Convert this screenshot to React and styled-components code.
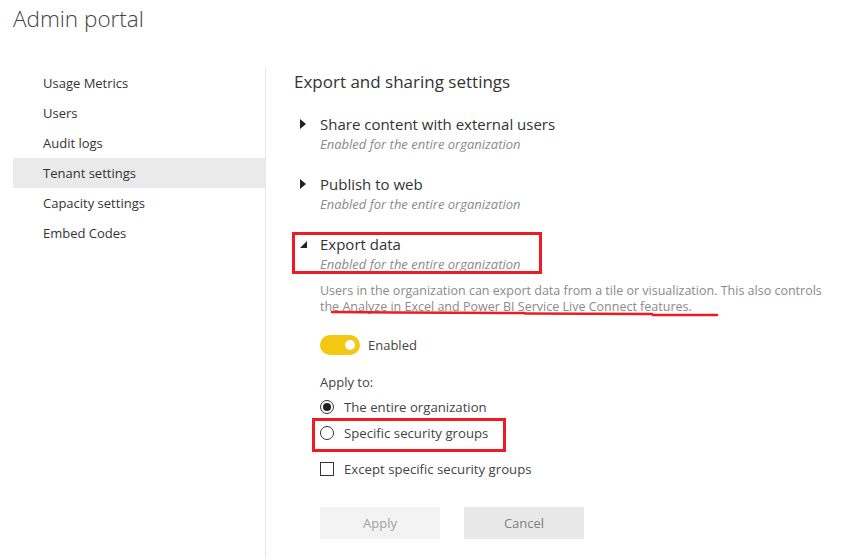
import React from "react";
import styled, { createGlobalStyle } from "styled-components";

const GlobalStyle = createGlobalStyle`
  body {
    margin: 0;
    background: #fff;
    font-family: "Open Sans", "Noto Sans", sans-serif;
    color: #333;
  }
`;

const Page = styled.div`
  width: 858px;
  height: 559px;
  overflow: hidden;
`;

const Title = styled.h1`
  margin: 0;
  padding: 5px 0 0 13px;
  height: 68px;
  box-sizing: border-box;
  font-size: 22.5px;
  font-weight: 300;
  line-height: 28px;
  color: #444;
`;

const Layout = styled.div`
  display: grid;
  grid-template-columns: 253px 1fr;
  margin-left: 13px;
  height: 491px;
`;

const Sidebar = styled.nav`
  display: flex;
  flex-direction: column;
  border-right: 1px solid #e6e6e6;
`;

const NavItem = styled.div`
  height: 30px;
  line-height: 30px;
  padding-left: 30px;
  font-size: 13px;
  color: #333;
  background: ${(p) => (p.$active ? "#eaeaea" : "transparent")};
`;

const Main = styled.main`
  padding: 2px 0 0 28px;
`;

const SectionTitle = styled.h2`
  margin: 0 0 20px;
  font-size: 17px;
  font-weight: 400;
  line-height: 24px;
  color: #333;
`;

const Setting = styled.div`
  position: relative;
  display: grid;
  grid-template-columns: 26px 1fr;
  margin-bottom: 20px;
`;

const Caret = styled.span`
  display: flex;
  align-items: center;
  height: 20px;
  padding-left: 6px;
`;

const SettingName = styled.div`
  font-size: 15px;
  line-height: 20px;
  color: #333;
`;

const SettingState = styled.div`
  font-size: 13px;
  line-height: 20px;
  font-style: italic;
  color: #8a8a8a;
`;

const Details = styled.div`
  grid-column: 2;
  padding-top: 9px;
`;

const Description = styled.p`
  position: relative;
  margin: 0;
  font-size: 12.5px;
  line-height: 16px;
  color: #8a8a8a;
  white-space: nowrap;
`;

const Scribble = styled.svg`
  position: absolute;
  left: 10px;
  top: 28px;
  overflow: visible;
`;

const ToggleRow = styled.label`
  display: flex;
  align-items: center;
  gap: 8px;
  margin-top: 20px;
  height: 20px;
  font-size: 13px;
  color: #444;
`;

const Track = styled.span`
  position: relative;
  width: 40px;
  height: 20px;
  border-radius: 10px;
  background: #f2c811;
`;

const Knob = styled.span`
  position: absolute;
  right: 5px;
  top: 5px;
  width: 10px;
  height: 10px;
  border-radius: 50%;
  background: #fff;
`;

const ApplyLabel = styled.div`
  margin-top: 17px;
  font-size: 13px;
  line-height: 20px;
  color: #444;
`;

const Choices = styled.div`
  display: flex;
  flex-direction: column;
  margin-top: 2px;
`;

const Choice = styled.label`
  position: relative;
  display: flex;
  align-items: center;
  gap: 10px;
  height: 26px;
  font-size: 13.2px;
  color: #444;
  margin-top: ${(p) => p.$gap || 0}px;
`;

const Radio = styled.span`
  box-sizing: border-box;
  width: 14px;
  height: 14px;
  border-radius: 50%;
  border: 1px solid #333;
  display: flex;
  align-items: center;
  justify-content: center;

  &::after {
    content: "";
    width: 8px;
    height: 8px;
    border-radius: 50%;
    background: ${(p) => (p.$checked ? "#222" : "transparent")};
  }
`;

const Box = styled.span`
  box-sizing: border-box;
  width: 14px;
  height: 14px;
  border: 1px solid #333;
`;

const Callout = styled.span`
  position: absolute;
  left: ${(p) => p.$x}px;
  top: ${(p) => p.$y}px;
  width: ${(p) => p.$w}px;
  height: ${(p) => p.$h}px;
  border: 3px solid #ed1c24;
  box-sizing: border-box;
  pointer-events: none;
`;

const Buttons = styled.div`
  display: flex;
  gap: 24px;
  margin-top: 25px;
`;

const Button = styled.button`
  width: 120px;
  height: 32px;
  border: none;
  font-family: inherit;
  font-size: 13px;
  background: ${(p) => (p.$muted ? "#f3f3f3" : "#e8e8e8")};
  color: ${(p) => (p.$muted ? "#a0a0a0" : "#808080")};
`;

const CaretIcon = ({ open }) =>
  open ? (
    <svg width="7" height="7" viewBox="0 0 7 7">
      <path d="M7 0 L7 7 L0 7 Z" fill="#222" />
    </svg>
  ) : (
    <svg width="6" height="10" viewBox="0 0 6 10">
      <path d="M0 0 L6 5 L0 10 Z" fill="#222" />
    </svg>
  );

const navItems = [
  "Usage Metrics",
  "Users",
  "Audit logs",
  "Tenant settings",
  "Capacity settings",
  "Embed Codes",
];

const collapsed = ["Share content with external users", "Publish to web"];

export default function App() {
  return (
    <Page>
      <GlobalStyle />
      <Title>Admin portal</Title>
      <Layout>
        <Sidebar>
          {navItems.map((item) => (
            <NavItem key={item} $active={item === "Tenant settings"}>
              {item}
            </NavItem>
          ))}
        </Sidebar>
        <Main>
          <SectionTitle>Export and sharing settings</SectionTitle>
          {collapsed.map((name) => (
            <Setting key={name}>
              <Caret>
                <CaretIcon />
              </Caret>
              <div>
                <SettingName>{name}</SettingName>
                <SettingState>Enabled for the entire organization</SettingState>
              </div>
            </Setting>
          ))}
          <Setting>
            <Callout $x={-2} $y={-2} $w={250} $h={42} />
            <Caret>
              <CaretIcon open />
            </Caret>
            <div>
              <SettingName>Export data</SettingName>
              <SettingState>Enabled for the entire organization</SettingState>
            </div>
            <Details>
              <Description>
                Users in the organization can export data from a tile or visualization. This also controls
                <br />
                the Analyze in Excel and Power BI Service Live Connect features.
                <Scribble width="390" height="8">
                  <g stroke="#ed1c24" strokeWidth="2.5" strokeLinecap="round" fill="none">
                    <path d="M2 1 L66 1.5" />
                    <path d="M67 1.5 L194 2" />
                    <path d="M195 2.5 L322 3" />
                    <path d="M323 4 L387 4" />
                  </g>
                </Scribble>
              </Description>
              <ToggleRow>
                <Track>
                  <Knob />
                </Track>
                Enabled
              </ToggleRow>
              <ApplyLabel>Apply to:</ApplyLabel>
              <Choices>
                <Choice>
                  <Radio $checked />
                  The entire organization
                </Choice>
                <Choice>
                  <Callout $x={-8} $y={-2} $w={194} $h={34} />
                  <Radio />
                  Specific security groups
                </Choice>
                <Choice $gap={10}>
                  <Box />
                  Except specific security groups
                </Choice>
              </Choices>
              <Buttons>
                <Button $muted>Apply</Button>
                <Button>Cancel</Button>
              </Buttons>
            </Details>
          </Setting>
        </Main>
      </Layout>
    </Page>
  );
}
